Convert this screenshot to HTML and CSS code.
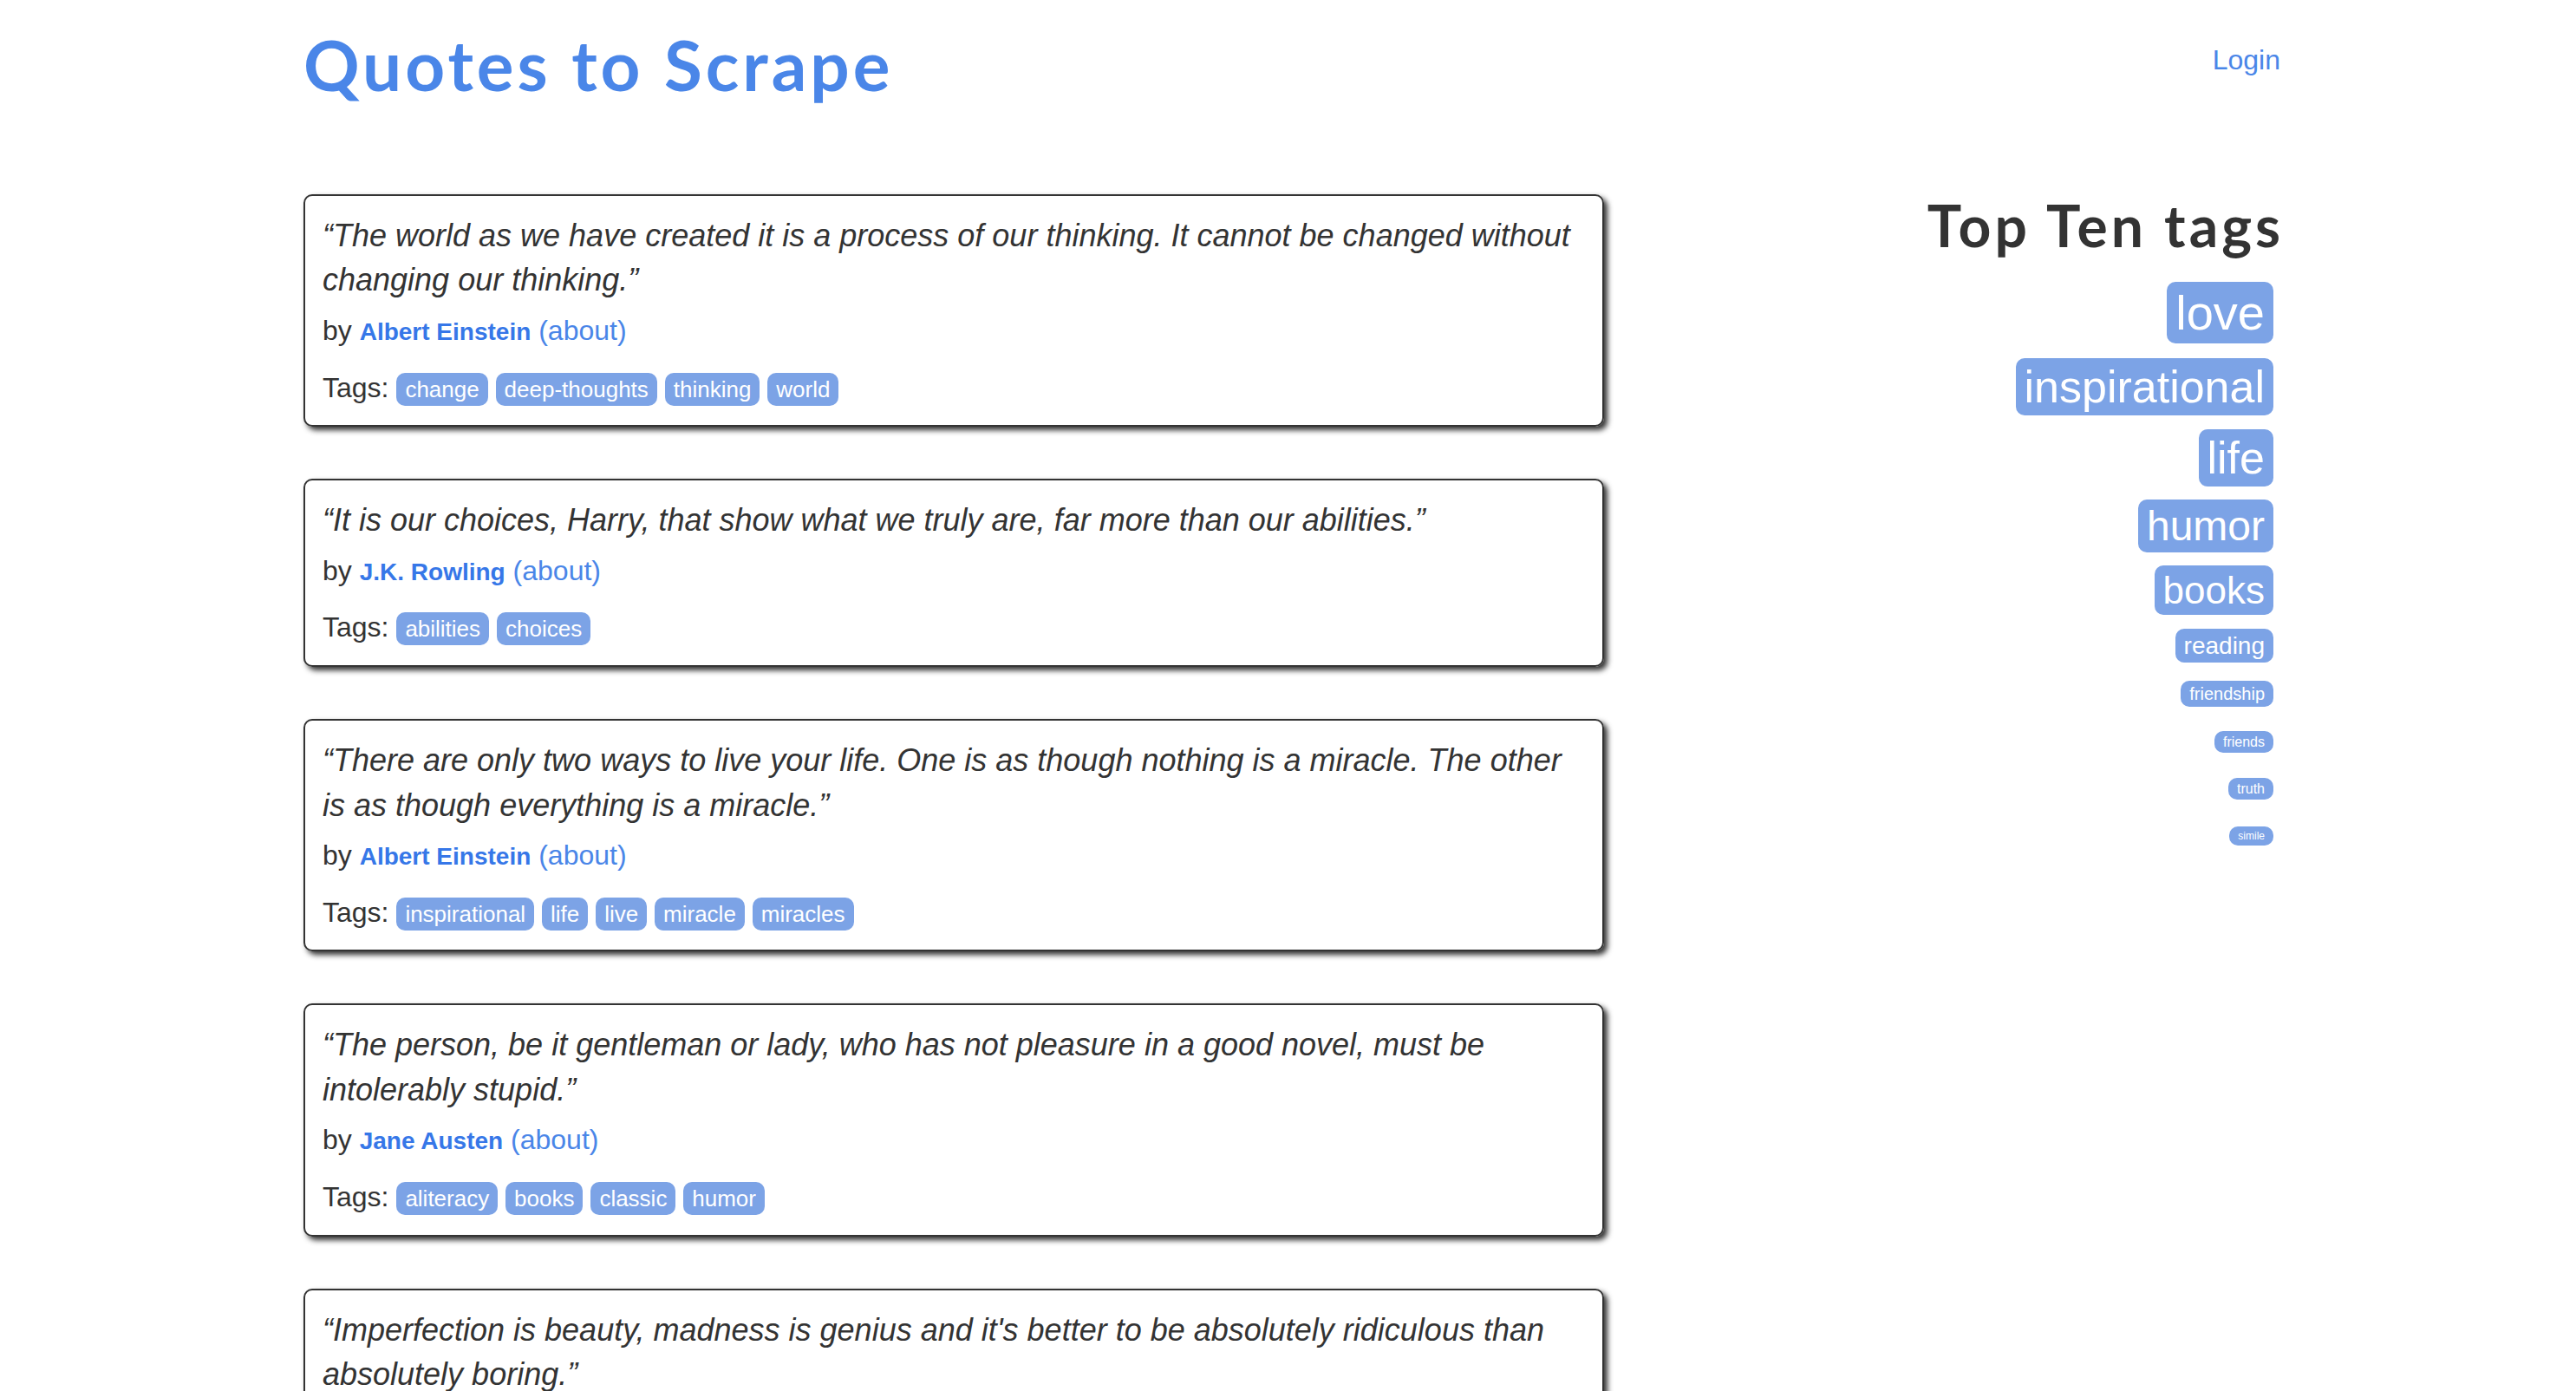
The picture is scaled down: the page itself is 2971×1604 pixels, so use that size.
FILE: index.html
```html
<!DOCTYPE html>
<html lang="en">
<head>
<meta charset="UTF-8">
<title>Quotes to Scrape</title>
<link rel="stylesheet" href="styles.css">
</head>
<body>
<div class="container">
  <div class="header-box">
    <h1 class="site-title"><a href="#">Quotes to Scrape</a></h1>
    <p class="login"><a href="#">Login</a></p>
  </div>
  <div class="row">
    <div class="col-main">
      <div class="quote">
        <span class="text">“The world as we have created it is a process of our thinking. It cannot be changed without changing our thinking.”</span>
        <span class="byline">by <small class="author">Albert Einstein</small> <a href="#">(about)</a></span>
        <div class="tags">Tags: <a class="tag" href="#">change</a> <a class="tag" href="#">deep-thoughts</a> <a class="tag" href="#">thinking</a> <a class="tag" href="#">world</a></div>
      </div>
      <div class="quote">
        <span class="text">“It is our choices, Harry, that show what we truly are, far more than our abilities.”</span>
        <span class="byline">by <small class="author">J.K. Rowling</small> <a href="#">(about)</a></span>
        <div class="tags">Tags: <a class="tag" href="#">abilities</a> <a class="tag" href="#">choices</a></div>
      </div>
      <div class="quote">
        <span class="text">“There are only two ways to live your life. One is as though nothing is a miracle. The other is as though everything is a miracle.”</span>
        <span class="byline">by <small class="author">Albert Einstein</small> <a href="#">(about)</a></span>
        <div class="tags">Tags: <a class="tag" href="#">inspirational</a> <a class="tag" href="#">life</a> <a class="tag" href="#">live</a> <a class="tag" href="#">miracle</a> <a class="tag" href="#">miracles</a></div>
      </div>
      <div class="quote">
        <span class="text">“The person, be it gentleman or lady, who has not pleasure in a good novel, must be intolerably stupid.”</span>
        <span class="byline">by <small class="author">Jane Austen</small> <a href="#">(about)</a></span>
        <div class="tags">Tags: <a class="tag" href="#">aliteracy</a> <a class="tag" href="#">books</a> <a class="tag" href="#">classic</a> <a class="tag" href="#">humor</a></div>
      </div>
      <div class="quote">
        <span class="text">“Imperfection is beauty, madness is genius and it's better to be absolutely ridiculous than absolutely boring.”</span>
        <span class="byline">by <small class="author">Marilyn Monroe</small> <a href="#">(about)</a></span>
        <div class="tags">Tags: <a class="tag" href="#">be-yourself</a> <a class="tag" href="#">inspirational</a></div>
      </div>
    </div>
    <div class="col-side tags-box">
      <h2 class="side-title">Top Ten tags</h2>
      <span class="tag-item"><a class="tag t28" href="#">love</a></span>
      <span class="tag-item"><a class="tag t26" href="#">inspirational</a></span>
      <span class="tag-item"><a class="tag t26" href="#">life</a></span>
      <span class="tag-item"><a class="tag t24" href="#">humor</a></span>
      <span class="tag-item"><a class="tag t22" href="#">books</a></span>
      <span class="tag-item"><a class="tag t14" href="#">reading</a></span>
      <span class="tag-item"><a class="tag t10" href="#">friendship</a></span>
      <span class="tag-item"><a class="tag t8" href="#">friends</a></span>
      <span class="tag-item"><a class="tag t8" href="#">truth</a></span>
      <span class="tag-item"><a class="tag t6" href="#">simile</a></span>
    </div>
  </div>
</div>
</body>
</html>
```
FILE: styles.css
```css
* { box-sizing: border-box; }
html, body { margin: 0; padding: 0; background: #fff; }
body {
  font-family: "Liberation Sans", Arial, Helvetica, sans-serif;
  font-size: 32px;
  line-height: 1.42857;
  color: #333;
}
a { color: #4a86e8; text-decoration: none; }

.container {
  width: 2340px;
  margin-left: 320px;
  padding: 0 30px;
}

.header-box {
  display: flex;
  justify-content: space-between;
  align-items: flex-start;
}
.site-title {
  margin: 26px 0 102px 0;
  font-family: Lato, "Open Sans", sans-serif;
  font-weight: 700;
  font-size: 80px;
  line-height: 96px;
  letter-spacing: 4px;
}
.site-title a { color: #4a86e8; }
.login {
  margin: 47px 0 0 0;
  font-size: 32px;
}

.row { display: flex; margin: 0 -30px; }
.col-main { width: 1560px; padding: 0 30px; }
.col-side { width: 780px; padding: 0 30px; }

.quote {
  padding: 20px;
  margin-bottom: 60px;
  border: 2px solid #333;
  border-radius: 10px;
  box-shadow: 4px 4px 6px #333;
}
.quote .text {
  display: block;
  font-size: 36px;
  font-style: italic;
  margin-bottom: 10px;
}
.quote .byline {
  display: block;
  margin-bottom: 10px;
}
.author {
  font-size: 28px;
  font-weight: bold;
  color: #3677e8;
}
.tags { margin-top: 20px; }
.tags .tag { font-size: 26px; }

.tag {
  display: inline;
  padding: 4px 10px;
  border-radius: 10px;
  color: #fff;
  background-color: #7ca3e6;
}

.tags-box { text-align: right; }
.side-title {
  margin: 0 -4px 24px 0;
  font-family: Lato, "Open Sans", sans-serif;
  font-weight: 700;
  font-size: 66px;
  line-height: 1.1;
  letter-spacing: 4px;
  color: #333;
}
.tag-item { display: block; margin: 8px; }
.tag-item .tag { line-height: 1.42857; }
.t28 { font-size: 56px; }
.t26 { font-size: 52px; }
.t24 { font-size: 48px; }
.t22 { font-size: 44px; }
.t14 { font-size: 28px; }
.t10 { font-size: 20px; }
.t8 { font-size: 16px; }
.t6 { font-size: 12px; }
```
